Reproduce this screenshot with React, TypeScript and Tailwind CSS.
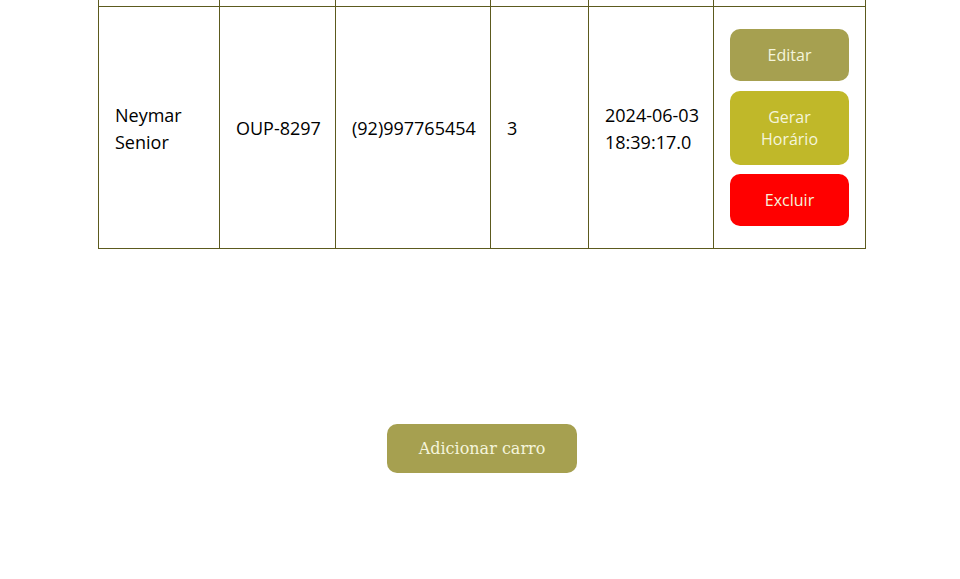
export default function App() {
  const cell = "border border-[#5c5a1e] px-4 align-middle text-left whitespace-nowrap";
  const text = `${cell} pt-[2px]`;
  return (
    <div className="w-[960px] h-[579px] overflow-hidden bg-white pl-[4px] font-['Open_Sans',sans-serif] text-[18px] text-black">
      <div className="flex flex-col items-center">
        <table className="-mt-[34px] w-[768px] table-fixed border-collapse">
          <tbody>
            <tr className="h-[40px]">
              <td className={`${cell} w-[121px]`}></td>
              <td className={`${cell} w-[116px]`}></td>
              <td className={`${cell} w-[155px]`}></td>
              <td className={`${cell} w-[98px]`}></td>
              <td className={`${cell} w-[125px]`}></td>
              <td className={`${cell}`}></td>
            </tr>
            <tr>
              <td className={text}>
                Neymar
                <br />
                Senior
              </td>
              <td className={text}>OUP-8297</td>
              <td className={text}>(92)997765454</td>
              <td className={text}>3</td>
              <td className={text}>
                2024-06-03
                <br />
                18:39:17.0
              </td>
              <td className={`${cell} pt-[22px] pb-[22px]`}>
                <div className="flex flex-col text-[16px] leading-[22px] text-[#f5f5dc]">
                  <button className="h-[52px] w-full rounded-[10px] bg-[#a6a050]">Editar</button>
                  <button className="mt-[10px] h-[74px] w-full whitespace-normal rounded-[10px] bg-[#c0b829] px-4">
                    Gerar Horário
                  </button>
                  <button className="mt-[9px] h-[52px] w-full rounded-[10px] bg-[#ff0000]">Excluir</button>
                </div>
              </td>
            </tr>
          </tbody>
        </table>
        <button className="mt-[175px] h-[49px] w-[190px] rounded-[10px] bg-[#a6a050] font-['DejaVu_Serif',serif] text-[16px] text-[#f5f5dc]">
          Adicionar carro
        </button>
      </div>
    </div>
  );
}
